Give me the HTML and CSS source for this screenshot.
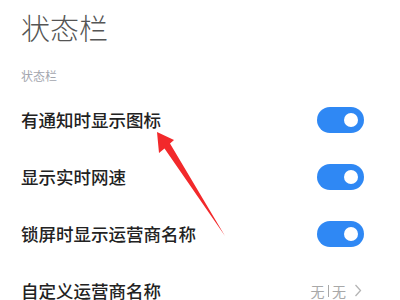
FILE: index.html
```html
<!DOCTYPE html>
<html lang="zh-CN">
<head>
<meta charset="utf-8">
<link rel="stylesheet" href="styles.css">
</head>
<body>
<div class="page">
  <h1 class="title">状态栏</h1>
  <div class="section">状态栏</div>
  <div class="row"><span class="label">有通知时显示图标</span><span class="toggle"><span class="knob"></span></span></div>
  <div class="row"><span class="label">显示实时网速</span><span class="toggle"><span class="knob"></span></span></div>
  <div class="row"><span class="label">锁屏时显示运营商名称</span><span class="toggle"><span class="knob"></span></span></div>
  <div class="row"><span class="label">自定义运营商名称</span><span class="value">无<span class="sep"></span>无<svg class="chev" width="8" height="13" viewBox="0 0 8 13"><path d="M1.5 1 L6.5 6.5 L1.5 12" fill="none" stroke="#b4b4b4" stroke-width="1.3"/></svg></span></div>
</div>
<svg class="arrow" width="400" height="300" viewBox="0 0 400 300">
  <polygon points="157,132 159,153 164.5,148.5 225,236 170,143.5 174,140" fill="#f2292b"/>
</svg>
</body>
</html>
```
FILE: styles.css
```css
html, body {
  margin: 0;
  padding: 0;
  background: #ffffff;
  width: 400px;
  height: 300px;
  overflow: hidden;
}
body {
  position: relative;
  font-family: "Noto Sans CJK SC", "Noto Sans", sans-serif;
}
.page {
  padding: 0 36px 0 21px;
}
.title {
  margin: 7px 0 0 0;
  font-size: 29px;
  line-height: 40px;
  font-weight: 300;
  color: #555555;
}
.section {
  margin-top: 21px;
  font-size: 12px;
  line-height: 16px;
  color: #a3a6ae;
}
.row {
  height: 57px;
  display: flex;
  align-items: center;
  justify-content: space-between;
}
.section + .row {
  margin-top: 7px;
}
.label {
  font-size: 17.5px;
  color: #222222;
  font-weight: 500;
}
.toggle {
  width: 47px;
  height: 26px;
  border-radius: 13px;
  background: #2f88f4;
  display: flex;
  align-items: center;
  justify-content: flex-end;
  padding-right: 6px;
  box-sizing: border-box;
}
.knob {
  width: 14px;
  height: 14px;
  border-radius: 50%;
  background: #ffffff;
}
.value {
  display: flex;
  align-items: center;
  font-size: 14px;
  color: #a8a8a8;
}
.sep {
  display: inline-block;
  width: 1.5px;
  height: 12px;
  background: #a8a8a8;
  margin: 0 3px;
}
.chev {
  margin-left: 8px;
  margin-right: 2px;
}
.arrow {
  position: absolute;
  left: 0;
  top: 0;
  pointer-events: none;
}
```
